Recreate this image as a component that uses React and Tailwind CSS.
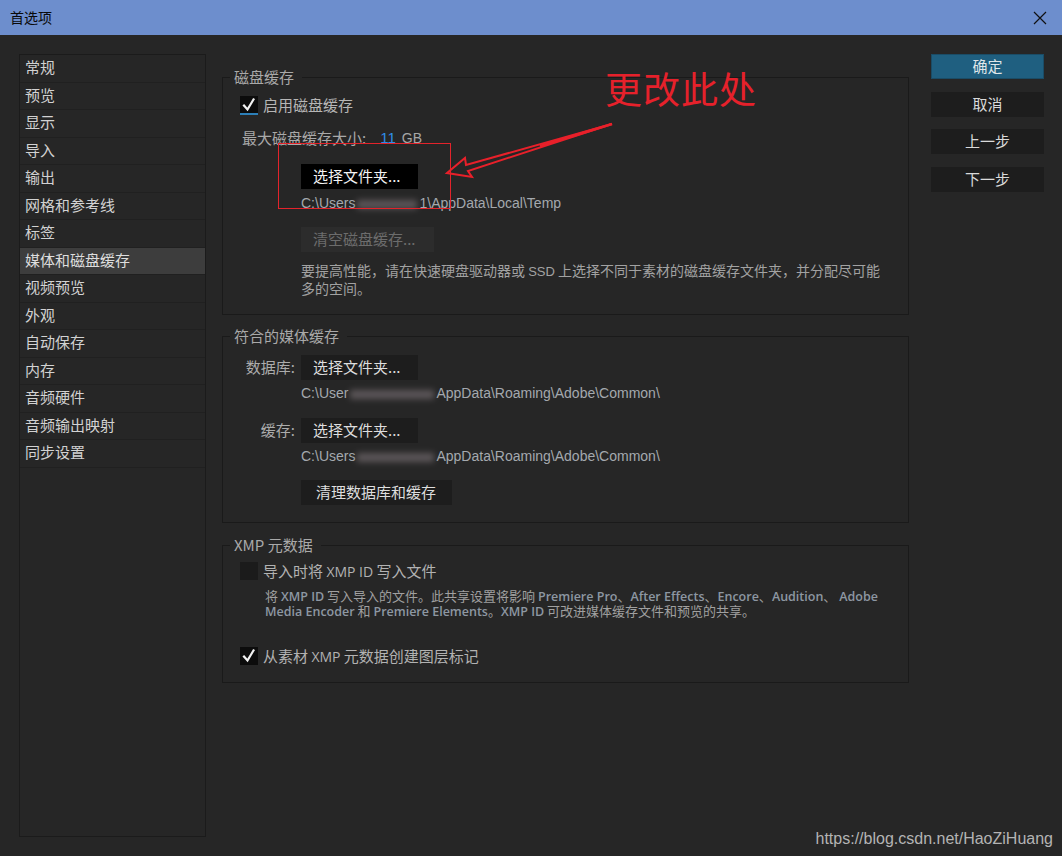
import React from "react";

const CJK = { fontFamily: '"Noto Sans CJK SC", "Noto Sans", sans-serif' };
const LAT = { fontFamily: '"Liberation Sans", "Noto Sans CJK SC", sans-serif' };

const navItems = [
  "常规",
  "预览",
  "显示",
  "导入",
  "输出",
  "网格和参考线",
  "标签",
  "媒体和磁盘缓存",
  "视频预览",
  "外观",
  "自动保存",
  "内存",
  "音频硬件",
  "音频输出映射",
  "同步设置",
];

function Check({ checked, underline }) {
  return (
    <div
      className={`relative w-[18px] h-[18px] shrink-0 ${checked ? "bg-[#0c0c0c]" : "bg-[#1b1b1b]"}`}
    >
      {checked && (
        <svg width="18" height="18" viewBox="0 0 18 18" className="absolute inset-0">
          <path d="M4 9.5 L7.5 13.5 L13.5 3.5" fill="none" stroke="#f2f2f2" strokeWidth="2.2" strokeLinecap="square" />
        </svg>
      )}
      {underline && <div className="absolute left-0 right-0 -bottom-[1px] h-[2px] bg-[#2c7fb8]" />}
    </div>
  );
}

function Blur({ w }) {
  return (
    <span className="inline-block align-middle relative h-[14px]" style={{ width: w }}>
      <span className="absolute inset-x-[2px] top-[3px] bottom-[2px] bg-[#6a6366] blur-[3px] opacity-80" />
    </span>
  );
}

function Group({ title, className, children }) {
  return (
    <div className={`relative border border-[#1a1a1a] ${className}`}>
      <span
        className="absolute -top-[10px] left-[7px] pl-[4px] pr-[8px] bg-[#262626] text-[15px] leading-[18px] text-[#a9a9a9] whitespace-nowrap"
        style={CJK}
      >
        {title}
      </span>
      {children}
    </div>
  );
}

function Btn({ children, w, variant = "normal" }) {
  const v =
    variant === "focus"
      ? "bg-[#000000] text-[#f4f4f4]"
      : variant === "disabled"
      ? "bg-[#2c2c2c] text-[#6c6c6c]"
      : "bg-[#1d1d1d] text-[#dedede]";
  return (
    <div
      className={`h-[25px] flex items-center pl-[12px] text-[15px] whitespace-nowrap ${v}`}
      style={{ ...CJK, width: w }}
    >
      {children}
    </div>
  );
}

function L({ children }) {
  return (
    <span className="text-[12.5px] font-semibold text-[#8d97a2]" style={{ fontFamily: '"Open Sans", sans-serif' }}>
      {children}
    </span>
  );
}

export default function App() {
  return (
    <div className="relative w-[1062px] h-[856px] bg-[#262626] overflow-hidden" style={CJK}>
      {/* title bar */}
      <div className="h-[35px] bg-[#6d8ecd] flex items-center justify-between pl-[10px] pr-[15px]">
        <span className="text-[14px] text-[#0a0a0a]" style={CJK}>首选项</span>
        <svg width="14" height="14" viewBox="0 0 14 14">
          <path d="M1 1 L13 13 M13 1 L1 13" stroke="#111" strokeWidth="1.2" />
        </svg>
      </div>

      {/* body */}
      <div className="flex pl-[19px] pt-[19px]">
        {/* sidebar */}
        <div className="w-[187px] h-[783px] border border-[#1b1b1b] shrink-0">
          {navItems.map((t) => (
            <div
              key={t}
              className={`h-[27.5px] flex items-center pl-[5px] pb-[2px] border-b border-[#202020] text-[15px] ${
                t === "媒体和磁盘缓存" ? "bg-[#3d3d3d] text-[#dedede]" : "text-[#d2d2d2]"
              }`}
            >
              {t}
            </div>
          ))}
        </div>

        {/* main */}
        <div className="ml-[16px] w-[687px] shrink-0">
          <Group title="磁盘缓存" className="mt-[23px] pl-[17px] pt-[18px] pb-[18px]">
            <div className="flex items-center h-[18px]">
              <Check checked underline />
              <span className="ml-[5px] text-[15px] text-[#b6b6b6]">启用磁盘缓存</span>
            </div>
            <div className="mt-[15px] h-[18px] flex items-center pl-[2px] text-[15px] text-[#a9a9a9] whitespace-nowrap">
              <span>最大磁盘缓存大小:</span>
              <span className="ml-[14px] text-[#2f8ee6] text-[15px]" style={LAT}>11</span>
              <span className="ml-[6px] text-[14px] text-[#a6a6a6]" style={LAT}>GB</span>
            </div>
            <div className="ml-[61px]">
              <div className="mt-[17px]">
                <Btn w={117} variant="focus">选择文件夹...</Btn>
              </div>
              <div className="mt-[6px] h-[16px] leading-[16px] text-[14px] text-[#a4a9ae] whitespace-nowrap" style={LAT}>
                C:\Users<Blur w={64} />1\AppData\Local\Temp
              </div>
              <div className="mt-[16px]">
                <Btn w={133} variant="disabled">清空磁盘缓存...</Btn>
              </div>
              <div className="mt-[10px] text-[14px] leading-[16px] text-[#a2a2a2] whitespace-nowrap">
                <div>要提高性能，请在快速硬盘驱动器或 <span style={LAT} className="text-[13px]">SSD</span> 上选择不同于素材的磁盘缓存文件夹，并分配尽可能</div>
                <div>多的空间。</div>
              </div>
            </div>
          </Group>

          <Group title="符合的媒体缓存" className="mt-[21px] pl-[17px] pt-[18px] pb-[17px]">
            <div className="flex items-center">
              <span className="w-[61px] pr-[6px] text-right text-[15px] text-[#acacac] whitespace-nowrap">数据库:</span>
              <Btn w={117}>选择文件夹...</Btn>
            </div>
            <div className="ml-[61px] mt-[5px] h-[16px] leading-[16px] text-[14px] text-[#a4a9ae] whitespace-nowrap" style={LAT}>
              C:\User<Blur w={88} />AppData\Roaming\Adobe\Common\
            </div>
            <div className="flex items-center mt-[17px]">
              <span className="w-[61px] pr-[6px] text-right text-[15px] text-[#acacac] whitespace-nowrap">缓存:</span>
              <Btn w={117}>选择文件夹...</Btn>
            </div>
            <div className="ml-[61px] mt-[5px] h-[16px] leading-[16px] text-[14px] text-[#a4a9ae] whitespace-nowrap" style={LAT}>
              C:\Users<Blur w={81} />AppData\Roaming\Adobe\Common\
            </div>
            <div className="ml-[61px] mt-[16px]">
              <Btn w={151}>
                <span className="pl-[3px]">清理数据库和缓存</span>
              </Btn>
            </div>
          </Group>

          <Group title="XMP 元数据" className="mt-[22px] pl-[17px] pt-[16px] pb-[17px]">
            <div className="flex items-center h-[18px]">
              <Check />
              <span className="ml-[5px] text-[15px] text-[#b2b2b2] whitespace-nowrap">
                导入时将 <span className="text-[14px]" style={{ fontFamily: '"Open Sans", sans-serif' }}>XMP ID</span> 写入文件
              </span>
            </div>
            <div className="ml-[25px] mt-[8px] text-[13px] leading-[15px] text-[#a0a0a0] whitespace-nowrap">
              <div className="h-[15px]">
                将 <L>XMP ID</L> 写入导入的文件。此共享设置将影响 <L>Premiere Pro</L>、<L>After Effects</L>、<L>Encore</L>、<L>Audition</L>、 <L>Adobe</L>
              </div>
              <div className="h-[15px]">
                <L>Media Encoder</L> 和 <L>Premiere Elements</L>。<L>XMP ID</L> 可改进媒体缓存文件和预览的共享。
              </div>
            </div>
            <div className="flex items-center h-[18px] mt-[29px]">
              <Check checked />
              <span className="ml-[5px] text-[15px] text-[#b2b2b2] whitespace-nowrap">
                从素材 <span className="text-[14px]" style={{ fontFamily: '"Open Sans", sans-serif' }}>XMP</span> 元数据创建图层标记
              </span>
            </div>
          </Group>
        </div>

        {/* right buttons */}
        <div className="ml-[22px] w-[113px] flex flex-col gap-[12.5px] shrink-0">
          <div className="h-[25px] bg-[#1f5f80] border border-[#1a4c66] flex items-center justify-center text-[15px] text-[#dfe6ea]">确定</div>
          <div className="h-[25px] bg-[#1d1d1d] flex items-center justify-center text-[15px] text-[#dadada]">取消</div>
          <div className="h-[25px] bg-[#1d1d1d] flex items-center justify-center text-[15px] text-[#dadada]">上一步</div>
          <div className="h-[25px] bg-[#1d1d1d] flex items-center justify-center text-[15px] text-[#dadada]">下一步</div>
        </div>
      </div>

      {/* annotation overlay */}
      <div className="absolute left-[278px] top-[143px] w-[173px] h-[66px] border border-[#e3232b] pointer-events-none" />
      <div
        className="absolute left-[605px] top-[66px] text-[37px] leading-[44px] text-[#e6212b] whitespace-nowrap pointer-events-none"
        style={{ fontFamily: '"Noto Sans CJK SC", serif', letterSpacing: "1px" }}
      >
        更改此处
      </div>
      <svg className="absolute left-0 top-0 pointer-events-none" width="1062" height="856">
        <path
          d="M447 173 L465 158 L466 165 L612 124 L468 171 L472 177 Z"
          fill="none"
          stroke="#e8202a"
          strokeWidth="2"
          strokeLinejoin="miter"
        />
        <path d="M540 146 L612 124" stroke="#e8202a" strokeWidth="2.5" />
      </svg>

      {/* watermark */}
      <div
        className="absolute right-[9px] bottom-[8px] text-[16px] leading-[18px] text-[#b4b4b4] whitespace-nowrap"
        style={{ fontFamily: '"Liberation Sans Narrow", "Liberation Sans", sans-serif' }}
      >
        https://blog.csdn.net/HaoZiHuang
      </div>
    </div>
  );
}
